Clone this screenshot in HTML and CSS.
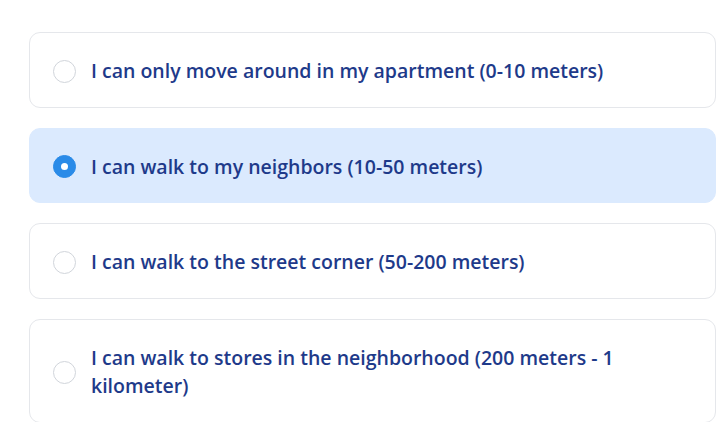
FILE: index.html
```html
<!DOCTYPE html>
<html lang="en">
<head>
<meta charset="utf-8">
<title>Mobility</title>
<link rel="stylesheet" href="styles.css">
</head>
<body>
<div class="options">
  <label class="option">
    <span class="radio"></span>
    <span class="label">I can only move around in my apartment (0-10 meters)</span>
  </label>
  <label class="option selected">
    <span class="radio checked"></span>
    <span class="label">I can walk to my neighbors (10-50 meters)</span>
  </label>
  <label class="option">
    <span class="radio"></span>
    <span class="label">I can walk to the street corner (50-200 meters)</span>
  </label>
  <label class="option">
    <span class="radio"></span>
    <span class="label">I can walk to stores in the neighborhood (200 meters - 1 kilometer)</span>
  </label>
</div>
</body>
</html>
```
FILE: styles.css
```css
html, body {
  margin: 0;
  padding: 0;
  background: #ffffff;
}
body {
  font-family: "Open Sans", "Noto Sans", "Liberation Sans", sans-serif;
  overflow: hidden;
}
.options {
  width: 687px;
  padding: 32px 0 0 29px;
  display: flex;
  flex-direction: column;
  gap: 20px;
}
.option {
  display: flex;
  align-items: center;
  gap: 15px;
  padding: 24px 23px 21px 23px;
  border: 1px solid #e5e7eb;
  border-radius: 11px;
  background: #ffffff;
}
.option.selected {
  background: #dbeafe;
  border-color: #dbeafe;
}
.radio {
  flex: 0 0 auto;
  box-sizing: border-box;
  width: 23px;
  height: 23px;
  border-radius: 50%;
  border: 1px solid #d1d5db;
  background: #ffffff;
  position: relative;
}
.radio.checked {
  background: #2a8be8;
  border-color: #2a8be8;
}
.radio.checked::after {
  content: "";
  position: absolute;
  left: 50%;
  top: 50%;
  width: 7px;
  height: 7px;
  margin: -3.5px 0 0 -3.5px;
  border-radius: 50%;
  background: #ffffff;
}
.label {
  font-size: 19.5px;
  font-weight: 600;
  line-height: 28.5px;
  color: #1e3a8a;
}
```
